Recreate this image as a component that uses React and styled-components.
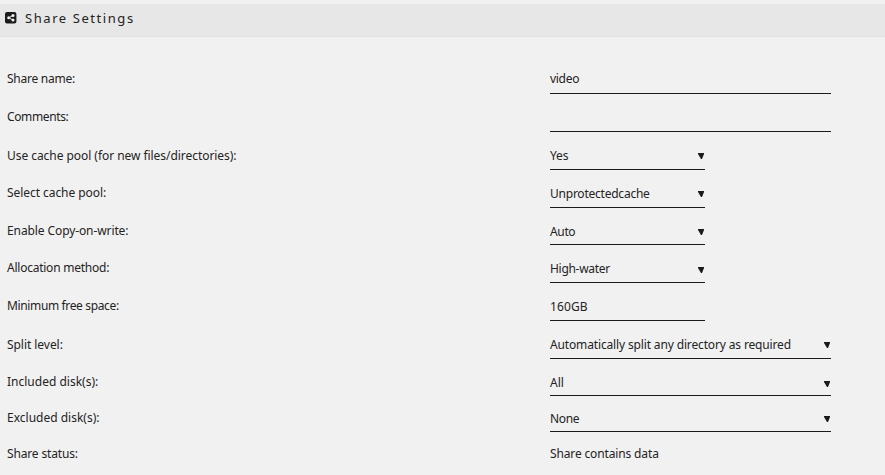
import React from "react";
import styled, { createGlobalStyle } from "styled-components";

const GlobalStyle = createGlobalStyle`
  *, *::before, *::after { box-sizing: border-box; }
  body {
    margin: 0;
    background: #f1f1f1;
    color: #242323;
    font: 12px/16px "Noto Sans", "Open Sans", sans-serif;
    overflow: hidden;
  }
`;

const Page = styled.main`
  padding-top: 4px;
  height: 475px;
  overflow: hidden;
`;

const TitleBar = styled.header`
  display: flex;
  align-items: center;
  gap: 8px;
  height: 33px;
  padding: 0 5px 4px;
  background: #e7e7e7;
  border-bottom: 1px solid #e0e0e0;
`;

const Title = styled.h1`
  margin: 0;
  font-size: 13px;
  line-height: 18px;
  font-weight: 400;
  letter-spacing: 1.57px;
  white-space: nowrap;
`;

const Form = styled.div`
  display: flex;
  flex-direction: column;
  padding: 19px 0 0 7px;
`;

const Row = styled.div`
  display: grid;
  grid-template-columns: 543px 281px;
  align-items: end;
  height: ${(p) => p.$height}px;
`;

const Label = styled.label`
  height: 16px;
  margin-bottom: ${(p) => p.$drop}px;
  letter-spacing: ${(p) => p.$tracking}px;
  white-space: nowrap;
`;

const Field = styled.div`
  display: flex;
  align-items: flex-start;
  justify-content: space-between;
  width: ${(p) => (p.$wide ? 281 : 155)}px;
  height: ${(p) => p.$lift + 16}px;
  border-bottom: ${(p) => (p.$plain ? "0" : "1px solid #1c1b1b")};
`;

const Value = styled.span`
  letter-spacing: ${(p) => p.$tracking}px;
  white-space: nowrap;
`;

const Arrow = styled.svg`
  flex: none;
  width: 6px;
  height: 6px;
  margin: ${(p) => p.$top}px 1px 0 0;
  fill: #1c1b1b;
`;

const ShareIcon = () => (
  <svg width="12" height="12" viewBox="0 0 12 12">
    <rect x="0" y="0" width="11.4" height="11.6" rx="2" fill="#1c1b1b" />
    <path d="M8 3.4 3.8 5.8 8 8.2" fill="none" stroke="#efefef" strokeWidth="1" />
    <circle cx="8" cy="3.5" r="1.5" fill="#efefef" />
    <circle cx="3.7" cy="5.8" r="1.5" fill="#efefef" />
    <circle cx="8" cy="8.1" r="1.5" fill="#efefef" />
  </svg>
);

const rows = [
  { label: "Share name:", value: "video", height: 38, drop: 7, lift: 7, wide: true, labelTracking: -0.25, valueTracking: -0.3 },
  { label: "Comments:", value: "", height: 38, drop: 7, lift: 7, wide: true, labelTracking: -0.38 },
  { label: "Use cache pool (for new files/directories):", value: "Yes", height: 38, drop: 6, lift: 6, arrow: 5, labelTracking: -0.05, valueTracking: -0.15 },
  { label: "Select cache pool:", value: "Unprotectedcache", height: 38, drop: 7, lift: 6, arrow: 5, labelTracking: -0.06, valueTracking: -0.23 },
  { label: "Enable Copy-on-write:", value: "Auto", height: 37, drop: 6, lift: 5, arrow: 5, labelTracking: -0.1, valueTracking: -0.35 },
  { label: "Allocation method:", value: "High-water", height: 38, drop: 7, lift: 6, arrow: 6, labelTracking: -0.24, valueTracking: -0.3 },
  { label: "Minimum free space:", value: "160GB", height: 38, drop: 7, lift: 6, labelTracking: -0.36, valueTracking: 0.1 },
  { label: "Split level:", value: "Automatically split any directory as required", height: 38, drop: 6, lift: 6, wide: true, arrow: 5, labelTracking: -0.05, valueTracking: -0.145 },
  { label: "Included disk(s):", value: "All", height: 37, drop: 6, lift: 5, wide: true, arrow: 6 },
  { label: "Excluded disk(s):", value: "None", height: 36, drop: 6, lift: 5, wide: true, arrow: 5, valueTracking: -0.35 },
  { label: "Share status:", value: "Share contains data", height: 36, drop: 6, lift: 6, wide: true, plain: true, labelTracking: -0.15, valueTracking: -0.14 },
];

export default function App() {
  return (
    <Page>
      <GlobalStyle />
      <TitleBar>
        <ShareIcon />
        <Title>Share Settings</Title>
      </TitleBar>
      <Form>
        {rows.map((r) => (
          <Row key={r.label} $height={r.height}>
            <Label $drop={r.drop} $tracking={r.labelTracking ?? 0}>{r.label}</Label>
            <Field $wide={r.wide} $lift={r.lift} $plain={r.plain}>
              <Value $tracking={r.valueTracking ?? 0}>{r.value}</Value>
              {r.arrow && (
                <Arrow $top={r.arrow} viewBox="0 0 6 6">
                  <path d="M0 0H6V1L4 6H3L0 1Z" />
                </Arrow>
              )}
            </Field>
          </Row>
        ))}
      </Form>
    </Page>
  );
}
